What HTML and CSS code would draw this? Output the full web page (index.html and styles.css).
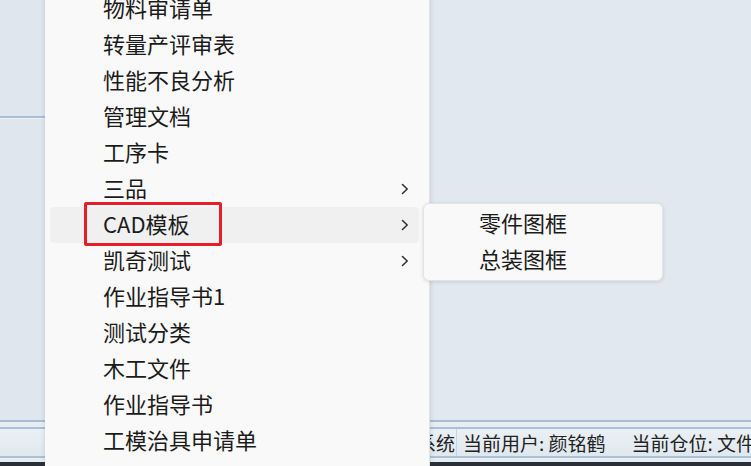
FILE: index.html
```html
<!DOCTYPE html>
<html lang="zh-CN">
<head>
<meta charset="utf-8">
<title>菜单</title>
<link rel="stylesheet" href="styles.css">
</head>
<body>
<div class="app">
  <div class="workspace">
    <div class="sidepane">
      <div class="sidepane-top"></div>
      <div class="sidepane-rest"></div>
    </div>
    <div class="mainpane"></div>
  </div>
  <div class="statusbar">
    <div class="status-inner">
      <span class="cell cell-first">欢迎使用管理系统</span>
      <span class="cell">当前用户: 颜铭鹤</span>
      <span class="cell cell-gap">当前仓位: 文件</span>
    </div>
  </div>
  <div class="taskbar"></div>
</div>

<div class="menu">
  <div class="item"><span class="label">物料审请单</span></div>
  <div class="item"><span class="label">转量产评审表</span></div>
  <div class="item"><span class="label">性能不良分析</span></div>
  <div class="item"><span class="label">管理文档</span></div>
  <div class="item"><span class="label">工序卡</span></div>
  <div class="item"><span class="label">三品</span><svg class="chev" viewBox="0 0 8 12" width="8" height="12"><path d="M1.5 1.5 L6.2 6 L1.5 10.5" fill="none" stroke="#333" stroke-width="1.6" stroke-linecap="round" stroke-linejoin="round"/></svg></div>
  <div class="item item-hover"><span class="label">CAD模板</span><svg class="chev" viewBox="0 0 8 12" width="8" height="12"><path d="M1.5 1.5 L6.2 6 L1.5 10.5" fill="none" stroke="#333" stroke-width="1.6" stroke-linecap="round" stroke-linejoin="round"/></svg></div>
  <div class="item"><span class="label">凯奇测试</span><svg class="chev" viewBox="0 0 8 12" width="8" height="12"><path d="M1.5 1.5 L6.2 6 L1.5 10.5" fill="none" stroke="#333" stroke-width="1.6" stroke-linecap="round" stroke-linejoin="round"/></svg></div>
  <div class="item"><span class="label">作业指导书1</span></div>
  <div class="item"><span class="label">测试分类</span></div>
  <div class="item"><span class="label">木工文件</span></div>
  <div class="item"><span class="label">作业指导书</span></div>
  <div class="item"><span class="label">工模治具申请单</span></div>
</div>

<div class="highlight-box"></div>

<div class="submenu">
  <div class="subitem">零件图框</div>
  <div class="subitem">总装图框</div>
</div>
</body>
</html>
```

FILE: styles.css
```css
html, body {
  margin: 0;
  padding: 0;
}
body {
  width: 751px;
  height: 466px;
  overflow: hidden;
  position: relative;
  background: #e1e8f0;
  font-family: "Microsoft YaHei", "Noto Sans CJK SC", "Noto Sans", sans-serif;
  color: #1b1b1b;
}
.app {
  display: flex;
  flex-direction: column;
  height: 466px;
}
.workspace {
  flex: 1;
  display: flex;
}
.sidepane {
  width: 45px;
  display: flex;
  flex-direction: column;
  background: #dfe6ee;
}
.sidepane-top {
  height: 116px;
  border-bottom: 2px solid #a9bfd6;
}
.sidepane-rest {
  flex: 1;
  border-top: 1px solid #eef3f8;
}
.mainpane {
  flex: 1;
  background: #e1e8f0;
}
.statusbar {
  height: 42px;
  box-sizing: border-box;
  border-top: 2px solid #a6bdd5;
  background: #e6edf3;
  padding-top: 5px;
}
.status-inner {
  height: 31px;
  box-sizing: border-box;
  border-top: 2px solid #a9c0d7;
  border-bottom: 2px solid #aac1d8;
  background: linear-gradient(#eaf0f5, #e0e8ef);
  display: flex;
  align-items: center;
  font-size: 19px;
  color: #222;
  white-space: nowrap;
  padding-bottom: 1px;
}
.cell-first {
  width: 457px;
  flex: none;
  text-align: right;
  border-right: 1px solid #c8d4e0;
  box-sizing: border-box;
  padding-right: 1px;
  margin-right: 6px;
}
.cell-gap {
  margin-left: 26px;
}
.taskbar {
  height: 4px;
  background: #2b3038;
}

.menu {
  position: absolute;
  left: 45px;
  top: -9px;
  width: 385px;
  height: 490px;
  background: #f9f9f9;
  box-shadow: 0 0 5px rgba(40, 60, 80, 0.18);
  border-right: 1px solid #e2e2e2;
  box-sizing: border-box;
}
.item {
  height: 36px;
  box-sizing: border-box;
  margin: 0 10px 0 5px;
  padding: 0 10px 4px 53px;
  display: flex;
  align-items: center;
  justify-content: space-between;
  border-radius: 4px;
  font-size: 22px;
  line-height: 30px;
}
.item-hover {
  background: #f0f0f0;
}
.chev {
  display: block;
  flex: none;
  margin-top: 4px;
}

.highlight-box {
  position: absolute;
  left: 84px;
  top: 202px;
  width: 138px;
  height: 44px;
  box-sizing: border-box;
  border: 3px solid #e51f28;
  border-radius: 2px;
}

.submenu {
  position: absolute;
  left: 423px;
  top: 203px;
  width: 240px;
  height: 78px;
  box-sizing: border-box;
  background: #f9f9f9;
  border: 1px solid #e3e3e3;
  border-radius: 6px;
  box-shadow: 0 1px 4px rgba(0, 0, 0, 0.12);
  padding: 0 0 0 55px;
}
.subitem {
  height: 36px;
  line-height: 36px;
  font-size: 22px;
}
```
